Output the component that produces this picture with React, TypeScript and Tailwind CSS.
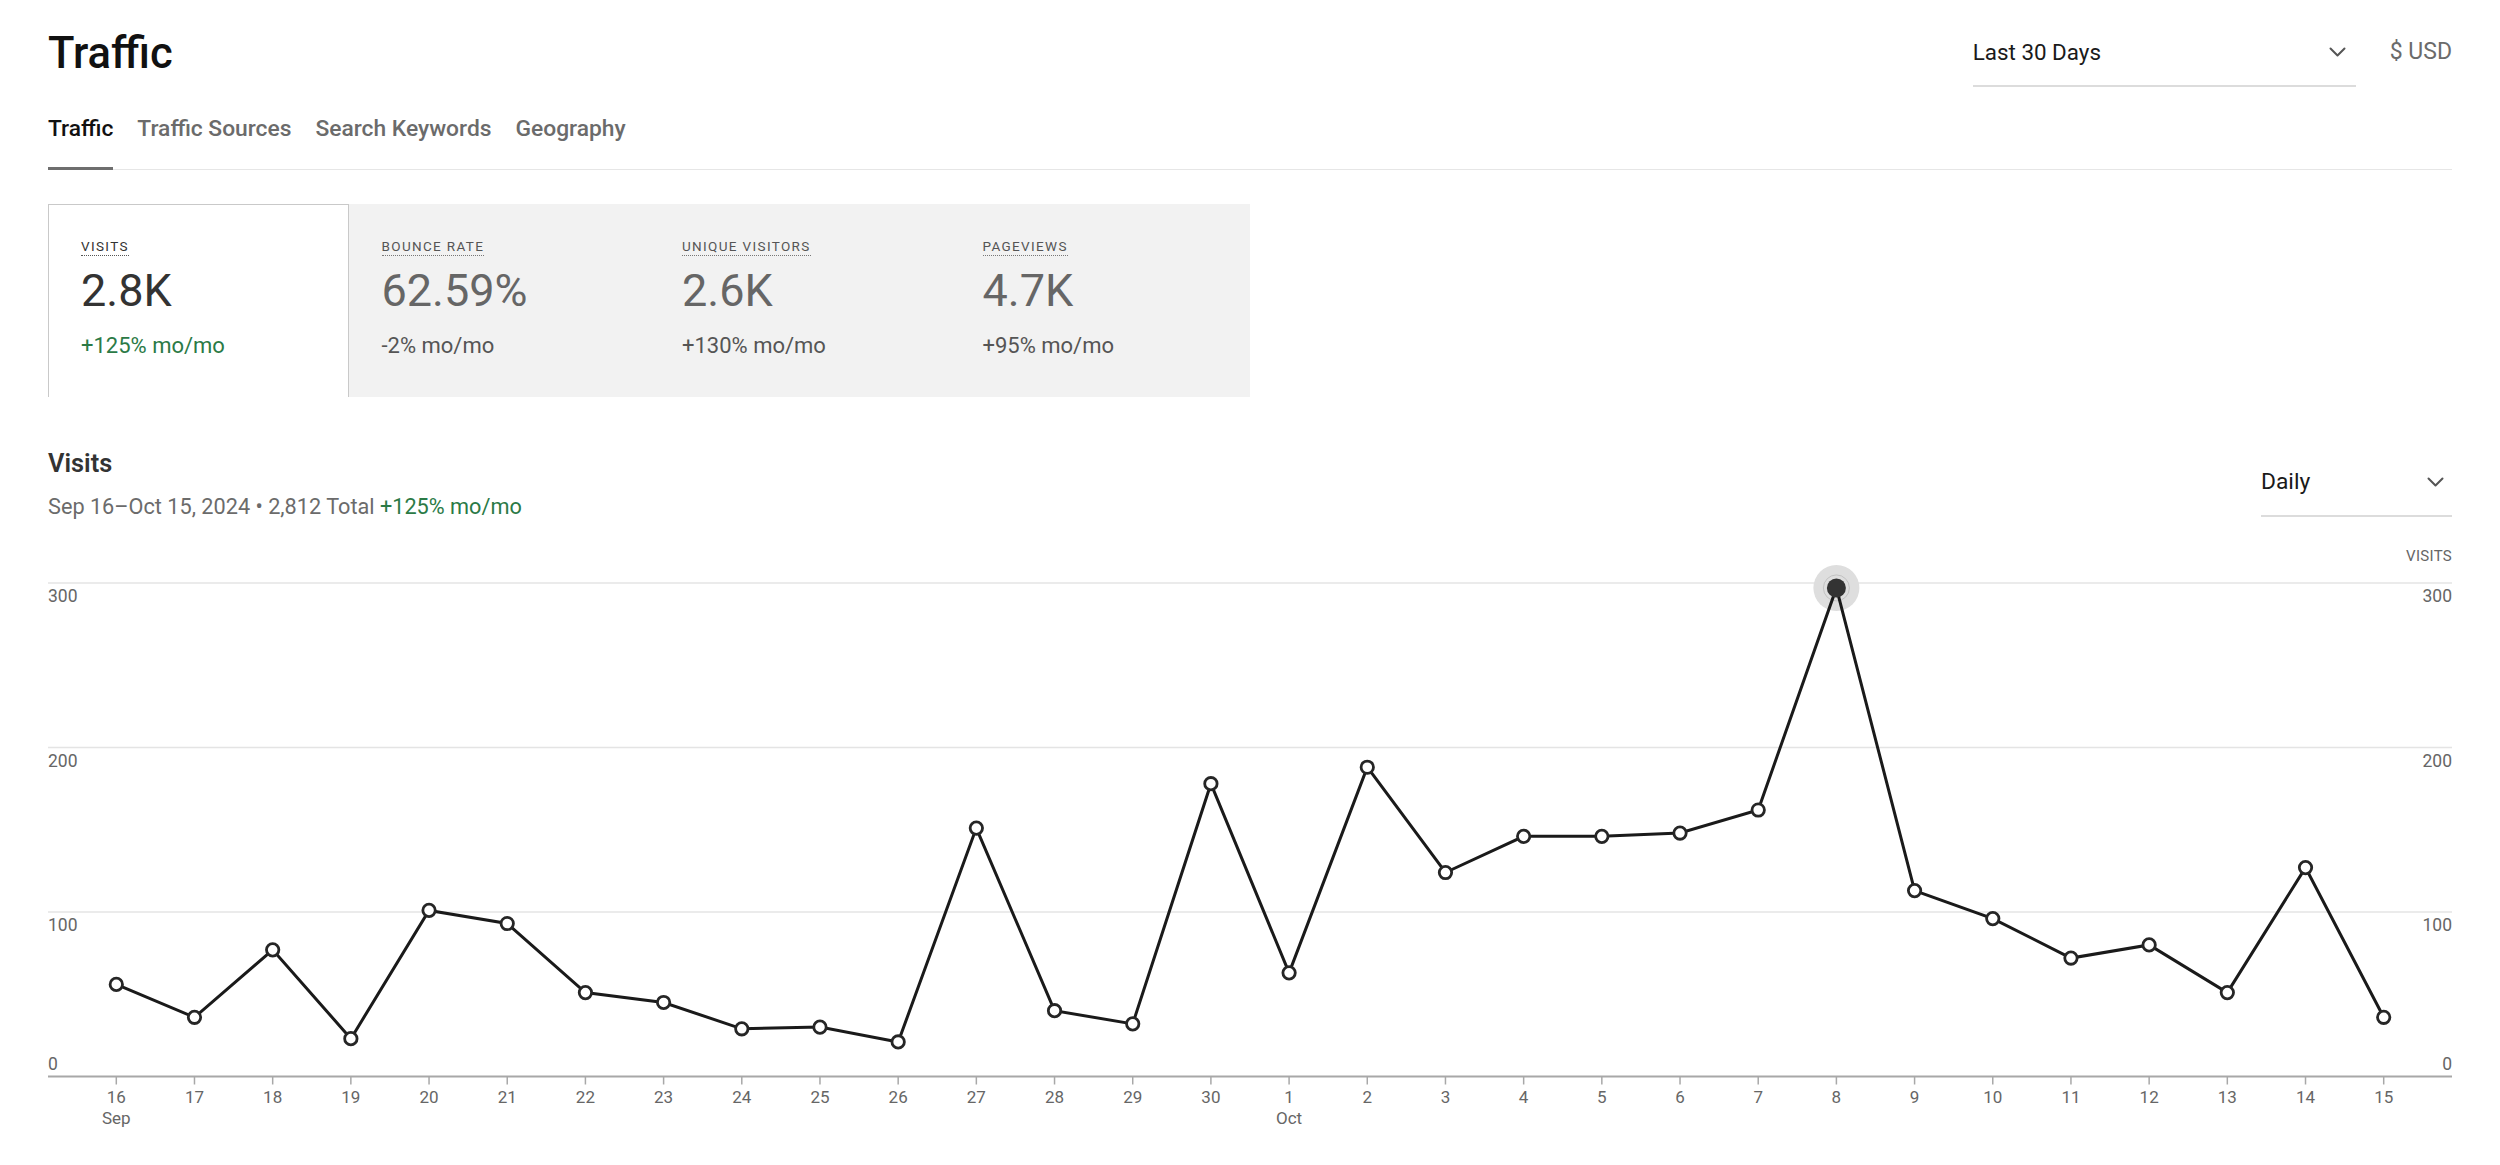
import React from 'react';

type Point = { day: string; month?: string; visits: number };

const visits: Point[] = [
  { day: '16', month: 'Sep', visits: 56 },
  { day: '17', visits: 36 },
  { day: '18', visits: 77 },
  { day: '19', visits: 23 },
  { day: '20', visits: 101 },
  { day: '21', visits: 93 },
  { day: '22', visits: 51 },
  { day: '23', visits: 45 },
  { day: '24', visits: 29 },
  { day: '25', visits: 30 },
  { day: '26', visits: 21 },
  { day: '27', visits: 151 },
  { day: '28', visits: 40 },
  { day: '29', visits: 32 },
  { day: '30', visits: 178 },
  { day: '1', month: 'Oct', visits: 63 },
  { day: '2', visits: 188 },
  { day: '3', visits: 124 },
  { day: '4', visits: 146 },
  { day: '5', visits: 146 },
  { day: '6', visits: 148 },
  { day: '7', visits: 162 },
  { day: '8', visits: 297 },
  { day: '9', visits: 113 },
  { day: '10', visits: 96 },
  { day: '11', visits: 72 },
  { day: '12', visits: 80 },
  { day: '13', visits: 51 },
  { day: '14', visits: 127 },
  { day: '15', visits: 36 },
];

const tabs = ['Traffic', 'Traffic Sources', 'Search Keywords', 'Geography'];

const metrics = [
  { label: 'Visits', value: '2.8K', delta: '+125% mo/mo', positive: true },
  { label: 'Bounce Rate', value: '62.59%', delta: '-2% mo/mo' },
  { label: 'Unique Visitors', value: '2.6K', delta: '+130% mo/mo' },
  { label: 'Pageviews', value: '4.7K', delta: '+95% mo/mo' },
];

const Chevron = () => (
  <svg width="17" height="10" viewBox="0 0 17 10" fill="none">
    <path d="M1.5 1.5 L8.5 8.5 L15.5 1.5" stroke="#555" strokeWidth="2" strokeLinecap="round" strokeLinejoin="round" />
  </svg>
);

// chart geometry
const W = 2404;
const H = 605;
const BASE = 546.5;
const PER_UNIT = 1.645;
const PAD = 68.3;
const STEP = (W - PAD * 2) / (visits.length - 1);
const ACTIVE = 22;

const xAt = (i: number) => PAD + STEP * i;
const yAt = (v: number) => BASE - v * PER_UNIT;

const VisitsChart = () => {
  const line = visits.map((p, i) => `${xAt(i).toFixed(1)},${yAt(p.visits).toFixed(1)}`).join(' ');
  const ticks = [300, 200, 100];

  return (
    <svg width={W} height={H} viewBox={`0 0 ${W} ${H}`} className="block" fontFamily="Roboto, sans-serif">
      <text x={W} y={30.7} textAnchor="end" fontSize="15" fill="#666" letterSpacing="0.3">
        VISITS
      </text>

      {/* horizontal gridlines with labels on both sides */}
      {ticks.map((t) => (
        <g key={t}>
          <line x1={0} x2={W} y1={yAt(t)} y2={yAt(t)} stroke="#e4e4e4" strokeWidth="1.5" />
          <text x={0} y={yAt(t) + 19} fontSize="17.5" fill="#666">{t}</text>
          <text x={W} y={yAt(t) + 19} fontSize="17.5" fill="#666" textAnchor="end">{t}</text>
        </g>
      ))}
      <text x={0} y={BASE - 6.5} fontSize="17.5" fill="#666">0</text>
      <text x={W} y={BASE - 6.5} fontSize="17.5" fill="#666" textAnchor="end">0</text>

      {/* x axis */}
      <line x1={0} x2={W} y1={BASE} y2={BASE} stroke="#a8a8a8" strokeWidth="2" />
      {visits.map((p, i) => (
        <g key={p.day + i}>
          <line x1={xAt(i)} x2={xAt(i)} y1={BASE} y2={BASE + 8} stroke="#a8a8a8" strokeWidth="1.5" />
          <text x={xAt(i)} y={573.3} fontSize="17" fill="#666" textAnchor="middle">{p.day}</text>
          {p.month && (
            <text x={xAt(i)} y={594} fontSize="17" fill="#666" textAnchor="middle">{p.month}</text>
          )}
        </g>
      ))}

      {/* hover halo under the line */}
      <circle cx={xAt(ACTIVE)} cy={yAt(visits[ACTIVE].visits)} r="23" fill="#dedede" />
      <circle cx={xAt(ACTIVE)} cy={yAt(visits[ACTIVE].visits)} r="13" fill="none" stroke="#c2c2c2" strokeWidth="1" />

      <polyline points={line} fill="none" stroke="#1a1a1a" strokeWidth="3" strokeLinejoin="miter" />

      {visits.map((p, i) =>
        i === ACTIVE ? null : (
          <circle key={i} cx={xAt(i)} cy={yAt(p.visits)} r="6.2" fill="#fff" stroke="#262626" strokeWidth="2.8" />
        )
      )}
      <circle cx={xAt(ACTIVE)} cy={yAt(visits[ACTIVE].visits)} r="9.5" fill="#333" />
    </svg>
  );
};

export default function App() {
  return (
    <div className="min-h-screen bg-white px-12 pt-[28px] font-[Roboto,sans-serif] text-[#1a1a1a]">
      <header className="flex items-start justify-between">
        <h1 className="text-[43.5px] leading-[52px] font-medium text-[#111]">Traffic</h1>
        <div className="flex items-start gap-[34px]">
          <button className="flex w-[383px] items-center justify-between border-b-2 border-[#dcdcdc] pt-[10px] pb-[19px] pr-[10px] text-left text-[22.4px] leading-[28px]">
            <span>Last 30 Days</span>
            <Chevron />
          </button>
          <span className="pt-[10px] text-[23px] leading-[28px] text-[#6b6b6b]">$ USD</span>
        </div>
      </header>

      <nav className="mt-[28px] flex gap-[24px] border-b border-[#e6e6e6]">
        {tabs.map((tab, i) => (
          <button
            key={tab}
            className={`-mb-px border-b-[3px] pb-[24px] text-[22.8px] leading-[28px] font-medium ${
              i === 0 ? 'border-[#6e6e6e] text-[#111]' : 'border-transparent text-[#6b6b6b]'
            }`}
          >
            {tab}
          </button>
        ))}
      </nav>

      {/* metric cards */}
      <div className="mt-[34px] grid w-[1202px] grid-cols-4 bg-[#f2f2f2]">
        {metrics.map((m, i) => (
          <div
            key={m.label}
            className={`h-[193px] ${i === 0 ? 'border border-b-0 border-[#c9c9c9] bg-white pt-[29px] pl-[32px]' : 'pt-[30px] pl-[33px]'}`}
          >
            <span
              className={`inline-block border-b border-dotted text-[13.5px] leading-[18px] tracking-[0.1em] uppercase ${
                i === 0 ? 'border-[#555] text-[#333]' : 'border-[#777] text-[#555]'
              }`}
            >
              {m.label}
            </span>
            <div className={`mt-[7px] text-[45px] leading-[51px] ${i === 0 ? 'text-[#333]' : 'text-[#666]'}`}>
              {m.value}
            </div>
            <div className={`mt-[16px] text-[22px] leading-[28px] ${m.positive ? 'text-[#2b7a46]' : 'text-[#555]'}`}>
              {m.delta}
            </div>
          </div>
        ))}
      </div>

      <section className="mt-[51px]">
        <div className="flex items-start justify-between">
          <div>
            <h2 className="text-[25.33px] leading-[32px] font-semibold text-[#333]">Visits</h2>
            <p className="mt-[13px] text-[21.7px] leading-[28px] text-[#6b6b6b]">
              Sep 16–Oct 15, 2024 • 2,812 Total <span className="text-[#2b7a46]">+125% mo/mo</span>
            </p>
          </div>
          <button className="flex w-[191px] items-center justify-between border-b-2 border-[#dcdcdc] pt-[20px] pb-[19px] pr-[8px] text-left text-[22.8px] leading-[28px]">
            <span>Daily</span>
            <Chevron />
          </button>
        </div>
        <div className="mt-[9px]">
          <VisitsChart />
        </div>
      </section>
    </div>
  );
}
